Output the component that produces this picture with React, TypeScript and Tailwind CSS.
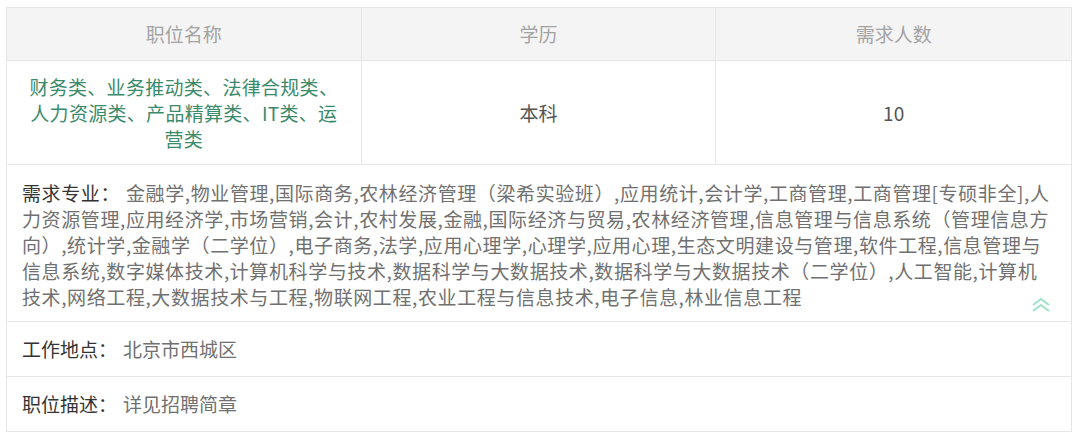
import React from "react";

const font = {
  fontFamily: '"Noto Sans CJK SC", "Noto Sans", sans-serif',
};

// 按参考图的换行分行
const majorLines = [
  "金融学,物业管理,国际商务,农林经济管理（梁希实验班）,应用统计,会计学,工商管理,工商管理[专硕非全],人",
  "力资源管理,应用经济学,市场营销,会计,农村发展,金融,国际经济与贸易,农林经济管理,信息管理与信息系统（管理信息方",
  "向）,统计学,金融学（二学位）,电子商务,法学,应用心理学,心理学,应用心理,生态文明建设与管理,软件工程,信息管理与",
  "信息系统,数字媒体技术,计算机科学与技术,数据科学与大数据技术,数据科学与大数据技术（二学位）,人工智能,计算机",
  "技术,网络工程,大数据技术与工程,物联网工程,农业工程与信息技术,电子信息,林业信息工程",
];

const InfoRow = ({ label, value }: { label: string; value: string }) => (
  <div className="flex h-[55px] items-center border-b border-[#e6e6e6] px-[15px] text-[19px] leading-[26px]">
    <span className="text-[#333]">{label}</span>
    <span className="ml-[6px] text-[#707070]">{value}</span>
  </div>
);

export default function App() {
  return (
    <div className="min-h-[437px] bg-white pl-[6px] pt-[7px]" style={font}>
      <div className="w-[1066px] border border-b-0 border-[#e6e6e6]">
        <div className="grid h-[53px] grid-cols-3 border-b border-[#e6e6e6] bg-[#f4f4f4] text-[19px] text-[#a3a3a3]">
          <div className="flex items-center justify-center border-r border-[#e6e6e6]">职位名称</div>
          <div className="flex items-center justify-center border-r border-[#e6e6e6]">学历</div>
          <div className="flex items-center justify-center">需求人数</div>
        </div>
        <div className="grid h-[104px] grid-cols-3 border-b border-[#e6e6e6] text-[19px] leading-[26px]">
          <div className="flex items-center justify-center border-r border-[#e6e6e6] px-[16px] text-center tracking-[0.3px] text-[#3a8a6c]">
            财务类、业务推动类、法律合规类、人力资源类、产品精算类、IT类、运营类
          </div>
          <div className="flex items-center justify-center border-r border-[#e6e6e6] text-[#555]">本科</div>
          <div className="flex items-center justify-center text-[#555]">10</div>
        </div>
        <div className="relative h-[157px] border-b border-[#e6e6e6] pl-[15px] pr-[18px] pt-[15px] text-[19px] leading-[26px] tracking-[0.6px]">
          {majorLines.map((line, i) => (
            <div key={i} className="whitespace-nowrap text-[#707070]">
              {i === 0 && <span className="mr-[6px] text-[#333]">需求专业：</span>}
              {line}
            </div>
          ))}
          <svg
            className="absolute bottom-[8px] right-[20px]"
            width="20"
            height="16"
            viewBox="0 0 20 16"
            fill="none"
            stroke="#9fe0c6"
            strokeWidth="2"
          >
            <polyline points="2,8 10,2 18,8" />
            <polyline points="2,14 10,8 18,14" />
          </svg>
        </div>
        <InfoRow label="工作地点：" value="北京市西城区" />
        <InfoRow label="职位描述：" value="详见招聘简章" />
      </div>
    </div>
  );
}
